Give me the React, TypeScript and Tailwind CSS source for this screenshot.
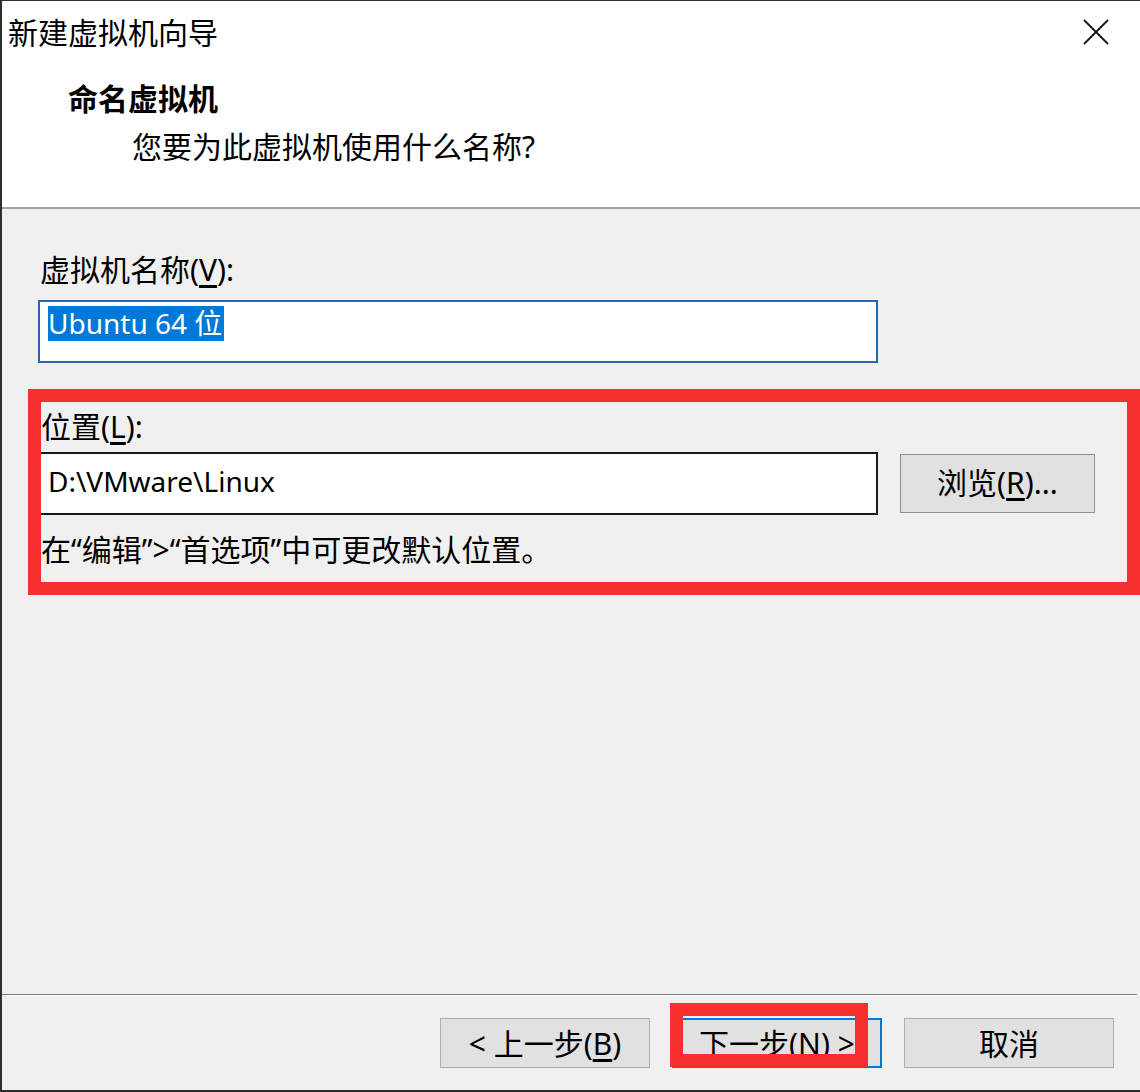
import React from "react";

const FONT = {
  fontFamily: '"Noto Sans", "Noto Sans CJK SC", sans-serif',
};

function CloseIcon() {
  return (
    <svg width="26" height="26" viewBox="0 0 26 26" className="block">
      <line x1="1" y1="1" x2="25" y2="25" stroke="#111" strokeWidth="1.8" />
      <line x1="25" y1="1" x2="1" y2="25" stroke="#111" strokeWidth="1.8" />
    </svg>
  );
}

// Windows-style dialog button
function WinButton({
  children,
  primary,
}: {
  children: React.ReactNode;
  primary?: boolean;
}) {
  return (
    <button
      className={
        primary
          ? "w-[210px] h-[50px] bg-[#e1e1e1] border-2 border-[#0078d7] text-[30px] leading-[48px] text-black"
          : "w-[210px] h-[50px] bg-[#e1e1e1] border border-[#adadad] text-[30px] leading-[50px] text-black"
      }
    >
      {children}
    </button>
  );
}

export default function App() {
  return (
    <div
      style={FONT}
      className="w-[1140px] h-[1092px] flex flex-col bg-[#f0f0f0] border-l-2 border-t border-b-2 border-[#2e2e2e] text-black"
    >
      {/* --- Header --- */}
      <div className="h-[206px] bg-white shrink-0">
        <div className="flex justify-between items-start pt-[13px] pl-[6px] pr-[31px]">
          <div className="text-[30px] leading-[38px]">新建虚拟机向导</div>
          <div className="pt-[5px]">
            <CloseIcon />
          </div>
        </div>
        <div className="mt-[28px] pl-[66px] text-[30px] leading-[38px] font-bold">
          命名虚拟机
        </div>
        <div className="mt-[10px] pl-[130px] text-[30px] leading-[38px]">
          您要为此虚拟机使用什么名称?
        </div>
      </div>
      <div className="h-[2px] bg-[#a0a0a0] shrink-0" />

      {/* --- Body --- */}
      <div className="flex-1 flex flex-col">
        <div className="pt-[42px] pl-[38px] text-[30px] leading-[38px]">
          虚拟机名称(<span className="underline underline-offset-4">V</span>):
        </div>
        <div className="mt-[11px] ml-[36px] w-[840px] h-[63px] bg-white border-2 border-[#2a66b8] pl-[8px] pt-[4px]">
          <span className="inline-block bg-[#0078d7] text-white text-[28px] leading-[35px] pr-[2px]">
            Ubuntu 64 位
          </span>
        </div>

        {/* --- Location section (highlighted) --- */}
        <div className="mt-[26px] ml-[26px] border-[13px] border-[#f72f2f] pt-[6px] pb-[13px]">
          <div className="text-[30px] leading-[38px]">
            位置(<span className="underline underline-offset-4">L</span>):
          </div>
          <div className="mt-[6px] flex items-start gap-[22px]">
            <div className="w-[837px] h-[63px] bg-white border-2 border-l-0 border-[#1a1a1a] pl-[7px] text-[28px] leading-[54px]">
              D:\VMware\Linux
            </div>
            <div className="mt-[2px] w-[195px] h-[59px] bg-[#e1e1e1] border border-[#8f8f8f] text-[30px] leading-[56px] text-center">
              浏览(<span className="underline underline-offset-4">R</span>)...
            </div>
          </div>
          <div className="mt-[16px] text-[30px] leading-[38px]">
            在“编辑”&gt;“首选项”中可更改默认位置。
          </div>
        </div>

        <div className="flex-1" />

        {/* --- Footer --- */}
        <div className="h-[96px] border-t border-[#7d7d7d] shrink-0 mr-[3px]">
          <div className="h-px bg-white" />
          <div className="pt-[22px] pl-[438px] flex gap-[22px]">
            <WinButton>
              &lt; 上一步(<span className="underline underline-offset-4">B</span>)
            </WinButton>
            <div className="relative">
              <WinButton primary>下一步(N) &gt;</WinButton>
              <div className="absolute left-[-2px] top-[-15px] w-[198px] h-[64px] border-[13px] border-[#f72f2f]" />
            </div>
            <WinButton>取消</WinButton>
          </div>
        </div>
      </div>
    </div>
  );
}
